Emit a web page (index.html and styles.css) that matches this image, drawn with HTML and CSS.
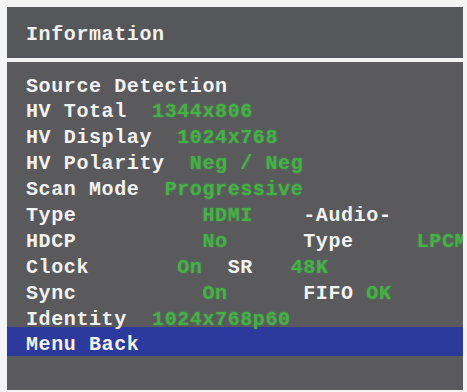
FILE: index.html
```html
<!DOCTYPE html>
<html>
<head>
<title>Information</title>
<link rel="stylesheet" href="styles.css">
</head>
<body>
<div class="osd">
    <div class="titulo">Information</div>
    <div class="cuerpo">
        <div class="fila primera">Source Detection</div>
        <div class="fila">HV Total  <span class="valor">1344x806</span></div>
        <div class="fila">HV Display  <span class="valor">1024x768</span></div>
        <div class="fila">HV Polarity  <span class="valor">Neg / Neg</span></div>
        <div class="fila">Scan Mode  <span class="valor">Progressive</span></div>
        <div class="fila">Type          <span class="valor">HDMI</span>    -Audio-</div>
        <div class="fila">HDCP          <span class="valor">No</span>      Type     <span class="valor">LPCM</span></div>
        <div class="fila">Clock       <span class="valor">On</span>  SR   <span class="valor">48K</span></div>
        <div class="fila">Sync          <span class="valor">On</span>      FIFO <span class="valor">OK</span></div>
        <div class="fila">Identity  <span class="valor">1024x768p60</span></div>
        <div class="menu">Menu Back</div>
    </div>
</div>
</body>
</html>
```

FILE: styles.css
```css
body{
    margin: 0;
    background-color: #f4f4f4;
    font-family: "Liberation Mono", "Courier New", monospace;
    font-weight: bold;
    font-size: 20px;
    letter-spacing: 0.6px;
    color: #f2f2f2;
}
.osd{
    width: 456px;
    margin: 7px 0 0 7px;
}
.titulo{
    background-color: #56575a;
    height: 51px;
    box-sizing: border-box;
    padding: 15px 19px 0;
    line-height: 26px;
}
.cuerpo{
    background-color: #5a5a5d;
    margin-top: 4px;
    height: 328px;
    box-sizing: border-box;
    padding-top: 12px;
    overflow: hidden;
}
.fila{
    white-space: pre;
    line-height: 26px;
    padding-left: 19px;
}
.primera{
    line-height: 25px;
}
.valor{
    color: #45b046;
    text-shadow: 0 0 2px rgba(70, 190, 70, 0.6);
}
.menu{
    background-color: #2b3a9c;
    margin-top: -6px;
    height: 29px;
    box-sizing: border-box;
    padding: 7px 19px 0;
    line-height: 22px;
}
```
